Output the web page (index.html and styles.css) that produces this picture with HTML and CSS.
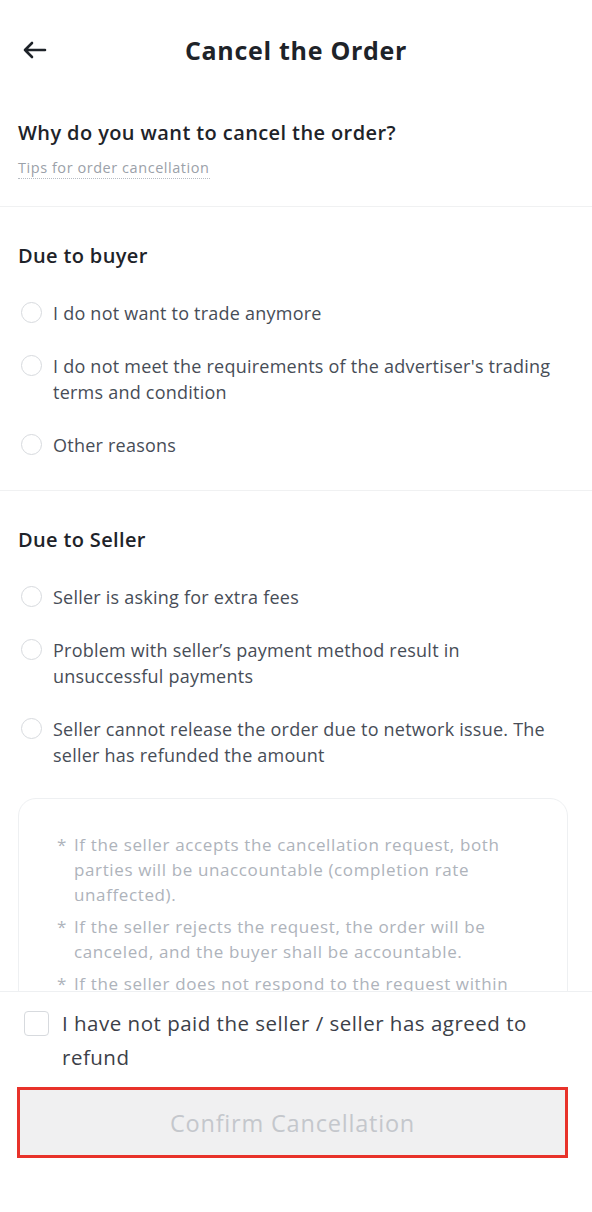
FILE: index.html
```html
<!DOCTYPE html>
<html lang="en">
<head>
<meta charset="utf-8">
<title>Cancel the Order</title>
<link rel="stylesheet" href="styles.css">
</head>
<body>
<div class="screen">
  <div class="content">
    <header class="topbar">
      <span class="back" aria-label="Back">
        <svg width="26" height="20" viewBox="0 0 26 20"><path d="M24 10H4M11 3L4 10l7 7" fill="none" stroke="#1e2329" stroke-width="2.6" stroke-linecap="round" stroke-linejoin="round"/></svg>
      </span>
      <h1 class="title">Cancel the Order</h1>
    </header>

    <section class="intro">
      <h2 class="question">Why do you want to cancel the order?</h2>
      <span class="tips">Tips for order cancellation</span>
    </section>

    <section class="group">
      <h3 class="group-title">Due to buyer</h3>
      <ul class="options">
        <li class="option"><span class="radio"></span><span class="label">I do not want to trade anymore</span></li>
        <li class="option"><span class="radio"></span><span class="label">I do not meet the requirements of the advertiser's trading terms and condition</span></li>
        <li class="option"><span class="radio"></span><span class="label">Other reasons</span></li>
      </ul>
    </section>

    <section class="group group-last">
      <h3 class="group-title">Due to Seller</h3>
      <ul class="options">
        <li class="option"><span class="radio"></span><span class="label">Seller is asking for extra fees</span></li>
        <li class="option"><span class="radio"></span><span class="label">Problem with seller’s payment method result in unsuccessful payments</span></li>
        <li class="option"><span class="radio"></span><span class="label">Seller cannot release the order due to network issue. The seller has refunded the amount</span></li>
      </ul>
    </section>

    <div class="notes">
      <p class="note"><span class="star">*</span><span>If the seller accepts the cancellation request, both parties will be unaccountable (completion rate unaffected).</span></p>
      <p class="note"><span class="star">*</span><span>If the seller rejects the request, the order will be canceled, and the buyer shall be accountable.</span></p>
      <p class="note"><span class="star">*</span><span>If the seller does not respond to the request within 15 minutes, the order will be canceled automatically.</span></p>
    </div>
  </div>

  <footer class="footer">
    <label class="agree"><span class="checkbox"></span><span class="agree-text">I have not paid the seller / seller has agreed to refund</span></label>
    <button class="confirm" type="button">Confirm Cancellation</button>
  </footer>
</div>
</body>
</html>
```

FILE: styles.css
```css
* { box-sizing: border-box; }
html, body { margin: 0; padding: 0; background: #ffffff; }
body {
  font-family: "Open Sans", "Noto Sans", Arial, sans-serif;
  color: #1e2329;
}
.screen {
  width: 592px;
  height: 1212px;
  display: flex;
  flex-direction: column;
  overflow: hidden;
}
.content {
  flex: 1;
  overflow: hidden;
  min-height: 0;
}
.topbar {
  height: 100px;
  display: flex;
  align-items: center;
  justify-content: center;
  position: relative;
}
.back {
  position: absolute;
  left: 21px;
  top: 40px;
  width: 26px;
  height: 20px;
  display: flex;
}
.title {
  margin: 0;
  font-size: 25px;
  font-weight: 700;
  letter-spacing: 0.7px;
  color: #1e2329;
}
.intro {
  padding: 19px 18px 27px;
  border-bottom: 1px solid #f0f1f2;
}
.question {
  margin: 0;
  font-size: 20px;
  line-height: 28px;
  font-weight: 600;
  letter-spacing: 0.4px;
  color: #1e2329;
}
.tips {
  display: inline-block;
  margin-top: 11px;
  font-size: 14.5px;
  line-height: 20px;
  letter-spacing: 0.55px;
  color: #9ba1a9;
  border-bottom: 1.5px dotted #b7bcc3;
}
.group {
  padding: 35px 18px 32px;
  border-bottom: 1px solid #f0f1f2;
}
.group-last { border-bottom: none; padding-bottom: 30px; }
.group-title {
  margin: 0 0 30px;
  font-size: 20px;
  line-height: 28px;
  font-weight: 600;
  letter-spacing: 0.35px;
  color: #1e2329;
}
.options {
  list-style: none;
  margin: 0;
  padding: 0;
  display: flex;
  flex-direction: column;
  gap: 27px;
}
.option {
  display: flex;
  align-items: flex-start;
  gap: 11px;
}
.radio {
  flex: none;
  width: 21px;
  height: 21px;
  margin: 2px 0 0 3px;
  border: 1.5px solid #d7dade;
  border-radius: 50%;
}
.label {
  font-size: 18px;
  line-height: 26px;
  letter-spacing: 0.23px;
  color: #474d57;
}
.notes {
  margin: 0 24px 0 18px;
  padding: 33px 46px 20px 38px;
  border: 1px solid #eef0f2;
  border-radius: 18px;
}
.note {
  margin: 0 0 7px;
  display: flex;
  gap: 7px;
  font-size: 17px;
  line-height: 25px;
  letter-spacing: 0.62px;
  color: #aeb3bb;
}
.star { flex: none; }
.footer {
  flex: none;
  height: 221px;
  border-top: 1px solid #eef0f2;
  background: #ffffff;
  padding: 14px 24px 0 17px;
}
.agree {
  display: flex;
  align-items: flex-start;
  gap: 13px;
  padding-left: 7px;
}
.checkbox {
  flex: none;
  width: 25px;
  height: 25px;
  margin-top: 5px;
  border: 1.5px solid #d7dade;
  border-radius: 4px;
}
.agree-text {
  font-size: 20.5px;
  line-height: 34px;
  letter-spacing: 0.5px;
  color: #3c4048;
}
.confirm {
  display: block;
  width: 551px;
  height: 71px;
  margin-top: 13px;
  border: 3px solid #e8322a;
  background: #f0f0f1;
  font-family: inherit;
  font-size: 23.5px;
  letter-spacing: 0.8px;
  color: #c4c7cc;
  padding: 0;
}
```
